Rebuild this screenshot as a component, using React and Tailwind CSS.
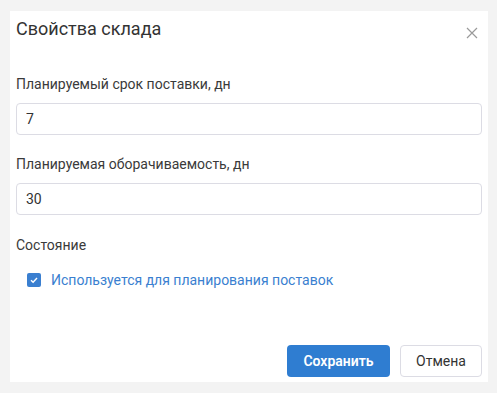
import { useState } from 'react';

const Field = ({ label, value, className }) => (
  <div className={className}>
    <div className="text-[14px] leading-[20px] text-[#3a3a3a]">{label}</div>
    <input
      defaultValue={value}
      className="mt-[9px] h-[32px] w-full rounded-[4px] border border-[#dcdce4] bg-white px-[9px] text-[14px] text-[#333] outline-none"
    />
  </div>
);

const App = () => {
  const [checked, setChecked] = useState(true);

  return (
    <div className="h-[393px] w-[497px] bg-[#f3f3f3] px-[10px] pt-[11px] font-['Roboto',sans-serif]">
      <div className="flex h-[371px] w-[478px] flex-col bg-white px-[6px]">
        {/* Заголовок */}
        <div className="flex items-center justify-between pt-[6px]">
          <h2 className="text-[18px] leading-[24px] text-[#333]">Свойства склада</h2>
          <button className="mr-[4px] mt-[8px] text-[#9a9a9a]">
            <svg width="12" height="12" viewBox="0 0 12 12" fill="none" stroke="currentColor" strokeWidth="1.2">
              <path d="M1 1L11 11M11 1L1 11" />
            </svg>
          </button>
        </div>

        <Field className="mt-[33px]" label="Планируемый срок поставки, дн" value="7" />
        <Field className="mt-[19px]" label="Планируемая оборачиваемость, дн" value="30" />

        <div className="mt-[20px] text-[14px] leading-[20px] text-[#3a3a3a]">Состояние</div>

        <label className="mt-[15px] flex cursor-pointer items-center gap-[10px] pl-[11px]">
          <span
            onClick={() => setChecked(!checked)}
            className={`flex h-[14px] w-[14px] items-center justify-center rounded-[2px] ${checked ? 'bg-[#3a7fd0]' : 'border border-[#ccc] bg-white'}`}
          >
            {checked && (
              <svg width="10" height="10" viewBox="0 0 10 10" fill="none" stroke="white" strokeWidth="1.4">
                <path d="M2 5.2L4.1 7.2L8 3" />
              </svg>
            )}
          </span>
          <span className="text-[14px] leading-[20px] text-[#3a7fd0]">Используется для планирования поставок</span>
        </label>

        <div className="mt-auto mb-[5px] flex justify-end gap-[10px]">
          <button className="h-[32px] w-[103px] rounded-[4px] bg-[#2f7dd1] text-[14px] font-semibold text-white">
            Сохранить
          </button>
          <button className="h-[32px] w-[82px] rounded-[4px] border border-[#dcdce4] bg-white text-[14px] text-[#333]">
            Отмена
          </button>
        </div>
      </div>
    </div>
  );
};

export default App;
